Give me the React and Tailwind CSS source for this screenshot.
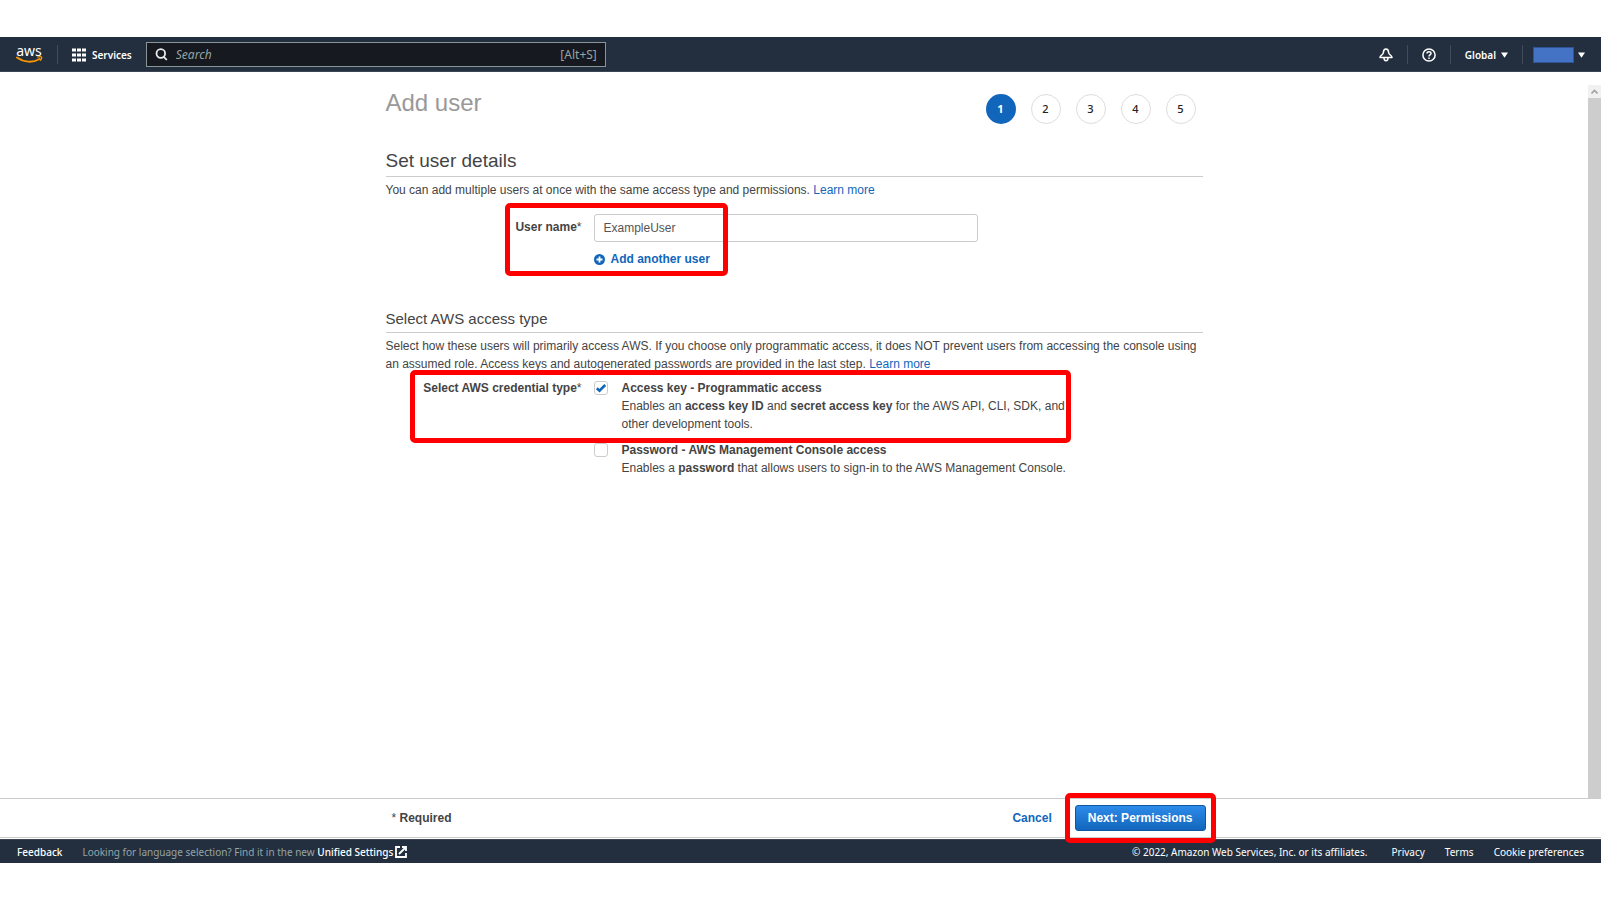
import { useState } from 'react';

const linkClass = 'text-[#1166bb] hover:underline';

function AwsLogo() {
  return (
    <a href="#home" aria-label="AWS home" className="flex w-7 flex-col items-center text-white">
      <span className="text-[14px] leading-[11px]">aws</span>
      <svg viewBox="0 0 27 8" className="h-2 w-[27px]" fill="none" stroke="#f79400">
        <path d="M1 1.6C8 6.6 17 7 23.6 3" strokeWidth="1.9" strokeLinecap="round" />
        <path d="M21.2 1.2c2-.6 3.8-.7 4.3-.2.4.6-.2 2.500-1.400 3.800" strokeWidth="1.300" />
      </svg>
    </a>
  );
}

function Caret() {
  return (
    <svg viewBox="0 0 8 6" className="h-[6px] w-[7px]" fill="#fff">
      <path d="M0 0h8L4 6z" />
    </svg>
  );
}

function Divider() {
  return <span className="h-[19px] w-px bg-[#414d5c]" />;
}

function Highlight({ className }) {
  return (
    <div className={`pointer-events-none absolute z-10 rounded-[5px] border-5 border-[#ff0000] ${className}`} />
  );
}

function Header() {
  return (
    <header className="flex h-[35px] items-center border-b border-[#3c4653] bg-[#232f3e] pt-px pl-[15px] pr-4 font-['Noto_Sans',sans-serif] text-[10px] text-white">
      <AwsLogo />
      <span className="ml-3.5 flex">
        <Divider />
      </span>
      <button type="button" className="ml-3.5 flex items-center gap-1.5 font-semibold">
        <svg viewBox="0 0 14 14" className="size-3.5" fill="#fff">
          {[0, 5, 10].map((y) => [0, 5, 10].map((x) => <rect key={`${x}-${y}`} x={x} y={y + 0.5} width="4" height="3" />))}
        </svg>
        Services
      </button>
      <label className="ml-3.5 flex h-[25px] w-[460px] items-center border border-[#879596] bg-[#16191f] px-2 text-[12px] text-[#95a5a6]">
        <svg viewBox="0 0 13 13" className="size-[13px]" fill="none" stroke="#e8ecec" strokeWidth="1.800">
          <circle cx="5.800" cy="5.500" r="4.300" />
          <path d="M8.800 8.800l3 3.200" />
        </svg>
        <input
          type="search"
          aria-label="Search"
          placeholder="Search"
          className="ml-2 min-w-0 flex-1 bg-transparent outline-none placeholder:italic placeholder:text-[#95a5a6]"
        />
        <span>[Alt+S]</span>
      </label>
      <div className="ml-auto flex items-center gap-3.5">
        <button type="button" aria-label="Notifications">
          <svg viewBox="0 0 14 14" className="size-3.5" fill="none" stroke="#fff" strokeWidth="1.500" strokeLinejoin="round">
            <path d="M7 1C5.200 1 4.500 2.500 4.400 4.500 4.300 6.800 1 7.200 1 9.600h12C13 7.200 9.700 6.800 9.600 4.500 9.500 2.500 8.800 1 7 1z" />
            <path d="M5 10c0 3.600 4 3.600 4 0" />
          </svg>
        </button>
        <Divider />
        <button type="button" aria-label="Help">
          <svg viewBox="0 0 14 14" className="size-3.5" fill="none" stroke="#fff" strokeWidth="1.500">
            <circle cx="7" cy="7" r="6.100" />
            <path d="M5 5.600C5 3.200 9 3.200 9 5.500 9 6.900 7 6.900 7 8.400" />
            <path d="M7 9.400v1.500" />
          </svg>
        </button>
        <Divider />
        <button type="button" className="flex items-center gap-[5px] font-semibold">
          Global
          <Caret />
        </button>
        <Divider />
        <button type="button" aria-label="Account" className="-ml-1 flex items-center gap-1">
          <span className="h-4 w-[41px] border border-[#2f5597] bg-[#4472c4]" />
          <Caret />
        </button>
      </div>
    </header>
  );
}

function Steps() {
  return (
    <ol className="mt-1.5 mr-[7px] flex gap-[15px] font-['Noto_Sans',sans-serif] text-[11px]">
      {[1, 2, 3, 4, 5].map((n) => (
        <li
          key={n}
          aria-current={n === 1 ? 'step' : undefined}
          className={`flex size-[30px] items-center justify-center rounded-full ${
            n === 1 ? 'bg-[#1166bb] font-bold text-white' : 'border border-[#dddddd] font-medium text-[#222222]'
          }`}
        >
          {n}
        </li>
      ))}
    </ol>
  );
}

function AccessOption({ id, checked, onChange, title, children }) {
  return (
    <div className="flex">
      <span className="relative mt-0.5 mr-3.5 flex size-3.5">
        <input
          id={id}
          type="checkbox"
          checked={checked}
          onChange={onChange}
          className="size-3.5 appearance-none rounded-[3px] border border-[#cccccc] bg-white"
        />
        {checked && (
          <svg viewBox="0 0 14 14" className="pointer-events-none absolute inset-0" fill="none" stroke="#1166bb" strokeWidth="2.600">
            <path d="M2.800 7.200l2.700 2.400L11.200 4" />
          </svg>
        )}
      </span>
      <div className="flex-1">
        <label htmlFor={id} className="block font-bold">
          {title}
        </label>
        <p>{children}</p>
      </div>
    </div>
  );
}

function Main() {
  const [name, setName] = useState('ExampleUser');
  const [programmatic, setProgrammatic] = useState(true);
  const [password, setPassword] = useState(false);
  return (
    <main className="flex-1 px-4 pt-4">
      <div className="mx-auto max-w-[817px]">
        <div className="flex items-start justify-between">
          <h1 className="text-[24px] leading-[30px] text-[#999999]">Add user</h1>
          <Steps />
        </div>

        <section>
          <h2 className="mt-[25px] border-b border-[#cccccc] pb-[3px] text-[19px] leading-6">Set user details</h2>
          <p className="mt-1">
            You can add multiple users at once with the same access type and permissions.{' '}
            <a href="#users" className={linkClass}>Learn more</a>
          </p>
          <div className="relative mt-[15px] flex">
            <label htmlFor="user-name" className="mr-3 w-[196px] pt-1 text-right font-bold">
              User name<span className="font-normal">*</span>
            </label>
            <div className="flex-1">
              <input
                id="user-name"
                type="text"
                value={name}
                onChange={(e) => setName(e.target.value)}
                className="block h-7 w-full max-w-96 rounded-[3px] border border-[#cccccc] px-[9px] text-[#555555] outline-none"
              />
              <button type="button" className="mt-2 flex items-center gap-1.5 font-bold text-[#1166bb]">
                <svg viewBox="0 0 11 11" className="size-[11px]">
                  <circle cx="5.500" cy="5.500" r="5.500" fill="#1166bb" />
                  <path d="M5.500 2.500v6M2.500 5.500h6" stroke="#fff" strokeWidth="1.800" />
                </svg>
                Add another user
              </button>
            </div>
            <Highlight className="top-[-11px] left-[119px] h-[73px] w-[223px]" />
          </div>
        </section>

        <section>
          <h3 className="mt-[41px] border-b border-[#cccccc] pb-[3px] text-[15px] leading-5">Select AWS access type</h3>
          <p className="mt-1">
            Select how these users will primarily access AWS. If you choose only programmatic access, it does NOT prevent
            users from accessing the console using an assumed role. Access keys and autogenerated passwords are provided
            in the last step. <a href="#access" className={linkClass}>Learn more</a>
          </p>
          <div className="relative mt-1.5 flex">
            <span className="mr-3 w-[196px] text-right font-bold">
              Select AWS credential type<span className="font-normal">*</span>
            </span>
            <div role="group" aria-label="Select AWS credential type" className="flex max-w-[474px] flex-1 flex-col gap-2">
              <AccessOption
                id="programmatic"
                checked={programmatic}
                onChange={(e) => setProgrammatic(e.target.checked)}
                title="Access key - Programmatic access"
              >
                Enables an <b>access key ID</b> and <b>secret access key</b> for the AWS API, CLI, SDK, and other
                development tools.
              </AccessOption>
              <AccessOption
                id="password"
                checked={password}
                onChange={(e) => setPassword(e.target.checked)}
                title="Password - AWS Management Console access"
              >
                Enables a <b>password</b> that allows users to sign-in to the AWS Management Console.
              </AccessOption>
            </div>
            <Highlight className="top-[-9px] left-6 h-[73px] w-[661px]" />
          </div>
        </section>
      </div>
    </main>
  );
}

function Footer() {
  return (
    <footer className="flex h-6 items-center border-t border-[#3c4653] bg-[#232f3e] px-[17px] font-['Noto_Sans',sans-serif] text-[10px] text-white">
      <a href="#feedback" className="font-medium">Feedback</a>
      <p className="ml-5 flex items-center text-[#95a5a6]">
        Looking for language selection? Find it in the new&nbsp;
        <a href="#settings" className="flex items-center gap-0.5 font-medium text-white">
          Unified Settings
          <svg viewBox="0 0 12 12" className="size-3" fill="none" stroke="#fff" strokeWidth="1.800">
            <path d="M5 1H1v10h10V7" />
            <path d="M7 1h4v4M11 1L4 8" />
          </svg>
        </a>
      </p>
      <div className="ml-auto flex items-center">
        <span>© 2022, Amazon Web Services, Inc. or its affiliates.</span>
        <a href="#privacy" className="ml-6">Privacy</a>
        <a href="#terms" className="ml-5">Terms</a>
        <a href="#cookies" className="ml-5">Cookie preferences</a>
      </div>
    </footer>
  );
}

export default function App() {
  return (
    <div className="flex min-h-screen flex-col bg-white py-[37px] font-['Liberation_Sans',Arial,sans-serif] text-[12px] leading-[18px] text-[#444444]">
      <Header />
      <div className="flex flex-1">
        <Main />
        <div aria-hidden="true" className="mt-[13px] flex w-[13px] flex-col bg-[#cdcdcd]">
          <span className="flex h-[13px] items-center justify-center bg-[#f1f1f1]">
            <svg viewBox="0 0 7 5" className="h-[5px] w-[7px]" fill="none" stroke="#a3a3a3" strokeWidth="1.600">
              <path d="M.5 4.500l3-3 3 3" />
            </svg>
          </span>
        </div>
      </div>
      <div className="mb-px border-y border-[#cccccc] pr-5 pl-4">
        <div className="mx-auto flex h-[38px] max-w-[814px] items-center">
          <span className="font-bold">
            <span className="font-normal">*</span> Required
          </span>
          <button type="button" className="ml-auto font-bold text-[#1166bb]">Cancel</button>
          <div className="relative ml-[23px]">
            <button
              type="button"
              className="block h-[26px] rounded-[3px] border border-[#0e56a0] bg-linear-to-b from-[#2d8bea] to-[#1166bb] px-3 font-bold text-white"
            >
              Next: Permissions
            </button>
            <Highlight className="-inset-x-2.5 -inset-y-3" />
          </div>
        </div>
      </div>
      <Footer />
    </div>
  );
}
